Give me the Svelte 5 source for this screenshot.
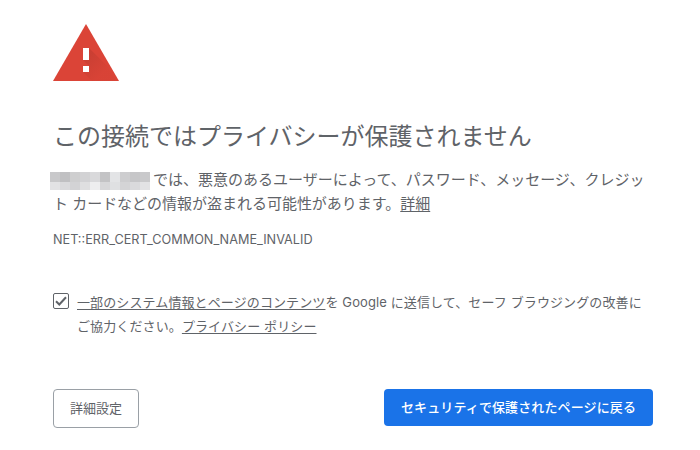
<script lang="ts">
  const mosaic = [
    '#c8c8ca', '#c0c0c2', '#cececf', '#d2d2d4', '#d9d9db', '#c3c3c5', '#e3e4e6', '#cdcdcf', '#c6c6c8', '#c9c9cb',
    '#e2e2e4', '#dadadc', '#d3d3d5', '#dfdfe0', '#eeeeef', '#d7d7d9', '#dfe0e2', '#d4d4d6', '#dadadc', '#e2e2e4'
  ];

  let reportEnabled = true;
</script>

<main>
  <svg class="warning" width="66" height="57" viewBox="0 0 66 57" aria-hidden="true">
    <defs>
      <linearGradient id="shade" gradientUnits="userSpaceOnUse" x1="33" y1="33" x2="49" y2="49">
        <stop offset="0" stop-color="#b93a2f" stop-opacity="0.5" />
        <stop offset="1" stop-color="#b93a2f" stop-opacity="0.08" />
      </linearGradient>
    </defs>
    <path d="M33 0 66 57H0z" fill="#db4437" />
    <path d="M36 24 54.500 42.500 63 57H39L30 48h6v-6l-6-6h6z" fill="url(#shade)" />
    <path d="M30 24h6v12h-6zM30 42h6v6h-6z" fill="#fff" />
  </svg>

  <h1>この接続ではプライバシーが保護されません</h1>

  <p class="message">
    <span class="line first"><span class="mosaic">{#each mosaic as color}<i style="background: {color}"></i>{/each}</span><span>では、悪意のあるユーザーによって、パスワード、メッセージ、クレジッ</span></span>
    <span class="line second">ト カードなどの情報が盗まれる可能性があります。<a href="#details">詳細</a></span>
  </p>

  <div class="error-code">NET::ERR_CERT_COMMON_NAME_INVALID</div>

  <label class="opt-in">
    <input type="checkbox" bind:checked={reportEnabled} />
    <span class="checkbox">
      {#if reportEnabled}
        <svg width="16" height="16" viewBox="0 0 16 16" aria-hidden="true">
          <path d="M3 8.300 6.300 11.500 13 4.200" fill="none" stroke="#5f6368" stroke-width="2" />
        </svg>
      {/if}
    </span>
    <span class="opt-in-text">
      <span class="line"><a href="#report">一部のシステム情報とページのコンテンツ</a>を Google に送信して、セーフ ブラウジングの改善に</span>
      <span class="line">ご協力ください。<a href="#privacy">プライバシー ポリシー</a></span>
    </span>
  </label>

  <div class="buttons">
    <button type="button" class="secondary">詳細設定</button>
    <button type="button" class="primary">セキュリティで保護されたページに戻る</button>
  </div>
</main>

<style>
  :global(body) {
    background: #fff;
  }

  main {
    box-sizing: border-box;
    width: 700px;
    height: 450px;
    padding: 24px 47px 0 53px;
    overflow: hidden;
    color: #5f6368;
    font-family: Inter, 'Noto Sans CJK JP', sans-serif;
  }

  .warning {
    display: block;
  }

  h1 {
    margin: 38px 0 0;
    font-size: 24px;
    font-weight: 400;
    line-height: 36px;
    white-space: nowrap;
  }

  .message {
    margin: 13px 0 0;
    font-size: 15px;
    line-height: 24px;
  }

  .line {
    display: block;
    white-space: nowrap;
  }

  .first {
    display: flex;
    align-items: center;
    gap: 3px;
    margin-left: -3px;
  }

  .mosaic {
    display: grid;
    grid-template-columns: repeat(10, 10px);
    grid-template-rows: 10px 8px;
    margin-top: 1px;
  }

  .second {
    letter-spacing: -0.02px;
  }

  a {
    color: inherit;
    text-decoration: underline;
    text-underline-offset: 2px;
  }

  .error-code {
    margin-top: 12px;
    font-size: 12.7px;
    line-height: 24px;
  }

  .opt-in {
    display: flex;
    margin-top: 38px;
    font-size: 13px;
    line-height: 24px;
  }

  .opt-in input {
    position: absolute;
    opacity: 0;
  }

  .checkbox {
    box-sizing: border-box;
    flex: none;
    width: 16px;
    height: 16px;
    margin: 3px 8px 0 0;
    border: 1px solid #5f6368;
    border-radius: 2px;
  }

  .checkbox svg {
    display: block;
    margin: -1px;
  }

  .opt-in-text {
    letter-spacing: 0.11px;
  }

  .buttons {
    display: flex;
    justify-content: space-between;
    align-items: flex-start;
    margin-top: 51px;
  }

  button {
    box-sizing: border-box;
    padding: 0 0 2px;
    border-radius: 4px;
    font: inherit;
    font-size: 13px;
    white-space: nowrap;
    cursor: pointer;
  }

  .secondary {
    width: 86px;
    height: 39px;
    border: 1px solid #9aa0a6;
    background: #fff;
    color: #5f6368;
  }

  .primary {
    width: 269px;
    height: 37px;
    border: 0;
    background: #1a73e8;
    color: #fff;
    font-weight: 500;
    letter-spacing: 0.12px;
  }
</style>
